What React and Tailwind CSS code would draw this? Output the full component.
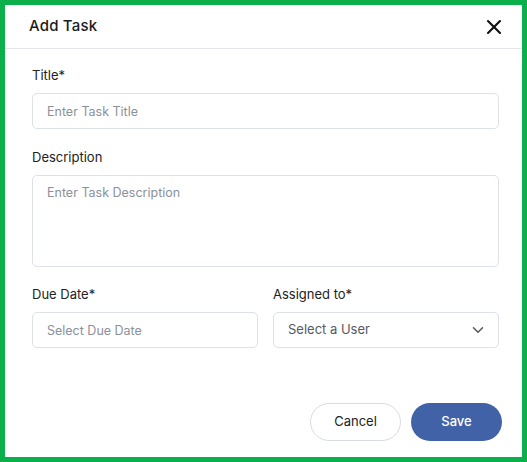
import { X, ChevronDown } from 'lucide-react'

const inputCls =
  'w-full h-[36px] rounded-[5px] border border-[#dde1e9] bg-white px-[14px] text-[12.5px] text-[#333] placeholder:text-[#8b909b] outline-none'

function Label({ children }) {
  return <label className="block text-[13px] leading-[20px] text-[#222] mb-[8px]">{children}</label>
}

export default function App() {
  return (
    <div className="w-[527px] h-[462px] border-[5px] border-[#0bb04b] bg-white flex flex-col" style={{ fontFamily: 'Inter, "Open Sans", sans-serif' }}>
      <div className="h-[44px] shrink-0 flex items-center justify-between pl-[24px] pr-[16px] border-b border-[#e6e7ee]">
        <h2 className="text-[15px] font-medium text-[#1b1b1b] tracking-[0.2px]">Add Task</h2>
        <button className="text-[#111]">
          <X size={24} strokeWidth={2.1} />
        </button>
      </div>

      <div className="flex-1 flex flex-col pl-[27px] pr-[23px] pt-[16px]">
        <Label>Title*</Label>
        <input className={inputCls} placeholder="Enter Task Title" />

        <div className="mt-[18px]">
          <Label>Description</Label>
          <textarea
            className="w-full h-[92px] resize-none rounded-[5px] border border-[#dde1e9] bg-white px-[14px] py-[8px] text-[12.5px] placeholder:text-[#8b909b] outline-none"
            placeholder="Enter Task Description"
          />
        </div>

        <div className="mt-[11px] grid grid-cols-2 gap-[15px]">
          <div>
            <Label>Due Date*</Label>
            <input className={inputCls} placeholder="Select Due Date" />
          </div>
          <div>
            <Label>Assigned to*</Label>
            <div className="h-[36px] rounded-[5px] border border-[#dde1e9] flex items-center justify-between pl-[14px] pr-[11px]">
              <span className="text-[13px] text-[#555a63]">Select a User</span>
              <ChevronDown size={18} strokeWidth={2} className="text-[#555]" />
            </div>
          </div>
        </div>

        <div className="mt-auto mb-[16px] flex justify-end gap-[10px] -mr-[3px]">
          <button className="w-[91px] h-[38px] rounded-full border border-[#d9dce4] bg-white text-[13px] text-[#222]">
            Cancel
          </button>
          <button className="w-[91px] h-[38px] rounded-full bg-[#4262a8] text-[13px] font-medium text-white">
            Save
          </button>
        </div>
      </div>
    </div>
  )
}
